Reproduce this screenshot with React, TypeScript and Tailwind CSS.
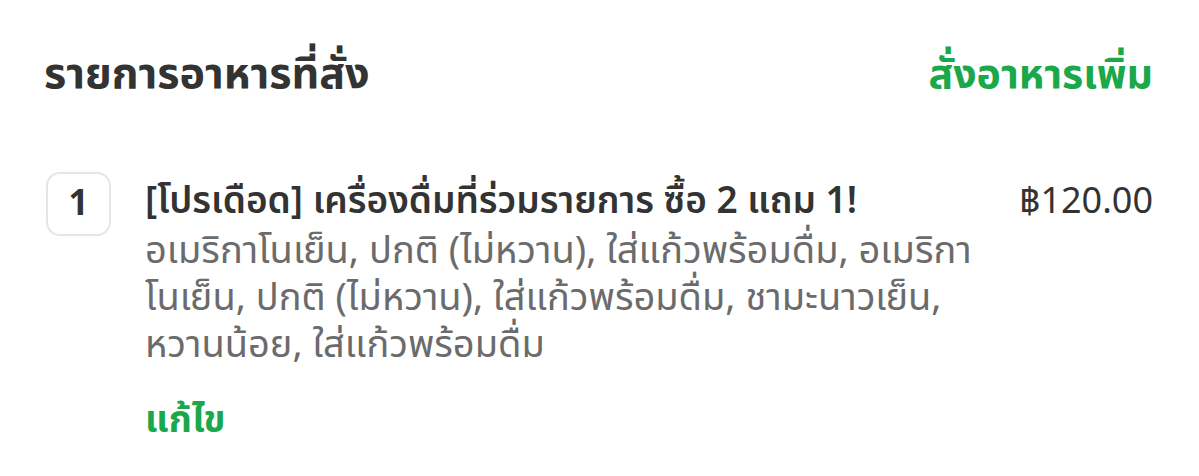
import React from 'react';

const font = { fontFamily: '"Noto Sans Thai", "Noto Sans", "Liberation Sans", sans-serif' };

const options = [
  'อเมริกาโนเย็น, ปกติ (ไม่หวาน), ใส่แก้วพร้อมดื่ม, อเมริกา',
  'โนเย็น, ปกติ (ไม่หวาน), ใส่แก้วพร้อมดื่ม, ชามะนาวเย็น,',
  'หวานน้อย, ใส่แก้วพร้อมดื่ม',
];

export default function App() {
  return (
    <div className="w-[1199px] h-[476px] bg-white text-[#333333]" style={font}>
      <div className="flex items-center justify-between pl-[44px] pr-[46px] pt-[49px]">
        <h2 className="text-[43px] font-bold leading-[52px]">รายการอาหารที่สั่ง</h2>
        <button className="text-[41px] font-bold leading-[52px] text-[#1ba84a]">สั่งอาหารเพิ่ม</button>
      </div>

      <div className="flex items-start pl-[46px] pr-[46px] pt-[75px]">
        <div className="w-[65px] h-[64px] flex items-center justify-center rounded-[14px] border-2 border-[#e6e6e6] text-[35px] font-bold leading-none shrink-0 -mt-[4px]">
          1
        </div>
        <div className="flex-1 pl-[34px] pr-[25px]">
          <div className="text-[37px] font-semibold leading-[52px]">
            [โปรเดือด] เครื่องดื่มที่ร่วมรายการ ซื้อ 2 แถม 1!
          </div>
          <div className="text-[38px] leading-[47px] text-[#6b6b6b]">
            {options.map((line) => (
              <div key={line} className="whitespace-nowrap">
                {line}
              </div>
            ))}
          </div>
          <button className="mt-[29px] text-[37px] font-bold leading-[47px] text-[#1ba84a]">แก้ไข</button>
        </div>
        <div className="text-[36px] leading-[52px] shrink-0">฿120.00</div>
      </div>
    </div>
  );
}
